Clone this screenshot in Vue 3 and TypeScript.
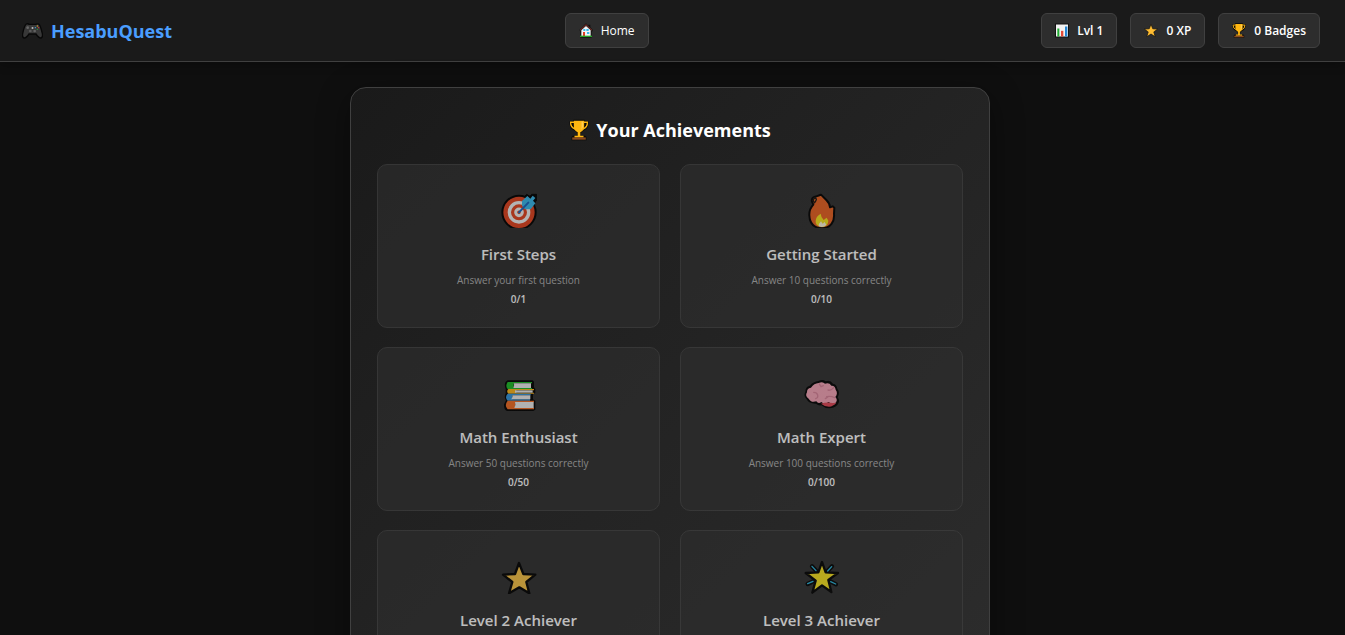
<script setup lang="ts">
interface Stat {
  icon: string
  label: string
}

interface Achievement {
  icon: string
  box: string
  title: string
  description: string
  progress: string
}

const stats: Stat[] = [
  { icon: 'chart', label: 'Lvl 1' },
  { icon: 'star', label: '0 XP' },
  { icon: 'trophy', label: '0 Badges' },
]

const achievements: Achievement[] = [
  { icon: 'target', box: '31 21 108 108', title: 'First Steps', description: 'Answer your first question', progress: '0/1' },
  { icon: 'flame', box: '40 21 108 108', title: 'Getting Started', description: 'Answer 10 questions correctly', progress: '0/10' },
  { icon: 'books', box: '31 15 108 108', title: 'Math Enthusiast', description: 'Answer 50 questions correctly', progress: '0/50' },
  { icon: 'brain', box: '40 15 108 108', title: 'Math Expert', description: 'Answer 100 questions correctly', progress: '0/100' },
  { icon: 'gold-star', box: '31 15 108 108', title: 'Level 2 Achiever', description: '', progress: '' },
  { icon: 'glow-star', box: '40 15 108 108', title: 'Level 3 Achiever', description: '', progress: '' },
]
</script>

<template>
  <div class="page">
    <svg class="sprite" aria-hidden="true">
      <symbol id="gamepad" viewBox="0 0 63 48">
        <path d="M13 3Q17 1 22 4H41Q47 1 51 4Q55 7 61 32Q63 43 57 45Q51 46 42 33H21Q12 46 6 45Q0 43 2 32Q7 7 13 3Z" fill="#383838" stroke="#080808" stroke-width="4" />
        <circle cx="17" cy="14" r="4" fill="#686868" />
        <circle cx="25" cy="24" r="4" fill="#5a5a5a" />
        <circle cx="38" cy="24" r="4" fill="#626262" />
        <path d="M29 13H34V17H29Z" fill="#eee" />
        <circle cx="40" cy="14" r="2" fill="#39a5dd" />
        <circle cx="46" cy="9" r="2" fill="#d9a72c" />
        <circle cx="50" cy="14" r="2" fill="#d73530" />
        <circle cx="46" cy="19" r="2" fill="#24a339" />
      </symbol>
      <symbol id="house" viewBox="0 0 42 45">
        <path d="M21 1L1 21L4 25H4V44H38V25H41V20L34 13V5H28V8Z" fill="#111" />
        <path d="M7 22L21 9L35 22V39H7Z" fill="#f4f4f4" />
        <path d="M3 22L21 5L39 22" fill="none" stroke="#8e332b" stroke-width="3" />
        <path d="M13 18H19V24H13ZM22 18H29V24H22ZM24 27H31V33H24Z" fill="#38b9ed" />
        <path d="M12 27H18V39H12Z" fill="#df3e28" />
        <path d="M3 38H39V42H3Z" fill="#26a326" />
      </symbol>
      <symbol id="chart" viewBox="0 0 42 42">
        <path d="M0 0H42V42H0Z" fill="#111" />
        <path d="M3 3H39V39H3Z" fill="#f2f2f2" />
        <path d="M7 15H13V39H7Z" fill="#20ae32" />
        <path d="M18 22H25V39H18Z" fill="#e44937" />
        <path d="M30 9H37V39H30Z" fill="#2384d3" />
      </symbol>
      <symbol id="star" viewBox="1 1 40 40">
        <path d="M21 3L26 16L40 17L29 25L33 39L21 31L9 39L13 25L2 17L16 16Z" fill="#ffbd32" stroke="#111" stroke-width="2" stroke-linejoin="round" />
      </symbol>
      <symbol id="trophy" viewBox="0 0 62 66">
        <path d="M14 1H48L49 5H59Q62 8 59 20Q56 33 43 35L36 43V51H50L54 55V65H8V55L12 51H26V43L19 35Q6 33 3 20Q0 8 3 5H13Z" fill="#090807" />
        <path d="M15 4H47V21Q47 34 35 40V51H45V56H17V51H27V40Q15 34 15 21Z" fill="#ffb711" />
        <path d="M17 9H5Q4 24 19 30M45 9H57Q58 24 43 30" fill="none" stroke="#ffb711" stroke-width="4" />
        <path d="M39 7H44V21Q43 28 37 33Q40 27 39 21Z" fill="#ffce57" />
        <path d="M10 56H52V63H10Z" fill="#8a4b20" />
      </symbol>
      <symbol id="target" viewBox="31 21 108 108">
        <path d="M91 46L108 28L118 34L123 28H138V45L132 54L125 72L91 59Z" fill="#000" stroke="#000" stroke-width="3" stroke-linejoin="round" />
        <circle cx="85" cy="82" r="50" fill="#e4421d" stroke="#000" stroke-width="6" />
        <circle cx="85" cy="82" r="29" fill="none" stroke="#f3f3f3" stroke-width="10" />
        <circle cx="85" cy="82" r="10" fill="#e4421d" stroke="#f3f3f3" stroke-width="9" />
        <path d="M94 62V48L110 33L119 41L126 32L134 39L127 47L134 55L120 73L103 73Z" fill="#36b9ed" />
        <path d="M85 82L113 53" fill="none" stroke="#1765c0" stroke-width="6" stroke-linecap="round" />
      </symbol>
      <symbol id="flame" viewBox="40 21 108 108">
        <path d="M91 29Q76 35 73 35Q61 39 64 50L68 59Q55 73 56 91C57 115 70 129 94 130C120 129 132 110 130 87L131 68L126 64L118 67Q118 56 107 45Q98 36 91 29Z" fill="#e9601e" stroke="#000" stroke-width="6" stroke-linejoin="round" />
        <path d="M75 38Q67 40 68 49L72 53Q76 48 77 43Z" fill="#ee681e" stroke="#17100c" stroke-width="4" />
        <path d="M90 86Q91 97 99 105L108 98L113 107Q113 124 94 126Q73 123 75 107Q76 94 90 86Z" fill="#f6e318" />
        <path d="M91 109L96 116L102 111L107 120Q96 130 84 123Q84 116 91 109Z" fill="#fff6dc" />
      </symbol>
      <symbol id="books" viewBox="31 15 108 108">
        <path d="M51 31H126L130 35V52L134 57V68L127 73V88L134 92V119L128 123H49Q39 120 40 103L46 91Q39 83 45 70V57Q40 44 45 35Z" fill="#000" />
        <path d="M51 36H124V40H69V54H124V57H51Q43 48 51 36Z" fill="#1bbb26" />
        <path d="M69 40H121V54H68Q73 46 69 40Z" fill="#eee" />
        <path d="M53 57H130V61H77V68H130V71H53Q46 64 53 57Z" fill="#ffb516" />
        <path d="M73 61H126V68H73Z" fill="#eee" />
        <path d="M51 71H120V76H65V88H118V92H51Q41 82 51 71Z" fill="#3095de" />
        <path d="M65 76H119V88H62Q67 82 65 76Z" fill="#eee" />
        <path d="M51 92H130V97H74V113H130V118H51Q40 106 51 92Z" fill="#f36b21" />
        <path d="M73 96H129V114H71Q76 105 73 96Z" fill="#eee" />
      </symbol>
      <symbol id="brain" viewBox="40 15 108 108">
        <path d="M83 33Q96 26 105 34Q119 29 127 41Q138 42 140 56Q149 67 141 82Q150 94 140 105Q130 115 116 115Q102 115 92 106Q83 108 76 101Q55 102 48 88Q37 78 44 65Q44 50 57 47Q68 35 83 33Z" fill="#000" />
        <path d="M84 39Q96 33 103 41Q116 37 122 47Q133 46 135 59Q143 69 134 81Q144 91 132 101Q121 102 113 96Q103 106 92 96Q83 103 77 94Q61 99 54 86Q42 78 49 67Q48 55 61 53Q70 40 84 39Z" fill="#f6a3b6" />
        <path d="M91 101Q108 95 126 99L137 98Q128 109 115 110Q102 110 91 101Z" fill="#df4353" />
        <path d="M69 67Q79 67 81 75Q83 84 75 86M86 42L91 50L98 47M112 60Q121 63 129 53M108 80Q120 77 132 83M104 86Q110 82 113 80" fill="none" stroke="#d98198" stroke-width="4" stroke-linecap="round" />
      </symbol>
      <symbol id="gold-star" viewBox="31 15 108 108">
        <path d="M85 30L98 63L134 65L107 87L116 121L86 103L55 121L65 87L37 65L73 63Z" fill="#f9c243" stroke="#000" stroke-width="7" stroke-linejoin="round" />
      </symbol>
      <symbol id="glow-star" viewBox="40 15 108 108">
        <g fill="none" stroke="#000" stroke-width="13" stroke-linecap="round">
          <path d="M64 40L77 54M110 55L124 40M51 93L67 85M119 85L136 94" />
        </g>
        <path d="M94 27L105 58L142 60L113 81L122 117L94 97L65 119L75 83L45 60L83 58Z" fill="#f7e11b" stroke="#000" stroke-width="7" stroke-linejoin="round" />
        <g fill="none" stroke="#28b4dc" stroke-width="4" stroke-linecap="round">
          <path d="M64 40L76 53M111 54L123 41M51 92L67 85M120 86L135 93" />
        </g>
      </symbol>
    </svg>

    <header class="topbar">
      <div class="brand">
        <svg class="brand-icon" aria-hidden="true"><use href="#gamepad" /></svg>
        <span>HesabuQuest</span>
      </div>
      <nav>
        <button class="pill home" type="button">
          <svg class="pill-icon" aria-hidden="true"><use href="#house" /></svg>
          <span>Home</span>
        </button>
      </nav>
      <div class="stats">
        <div v-for="stat in stats" :key="stat.label" class="pill">
          <svg class="pill-icon" aria-hidden="true"><use :href="'#' + stat.icon" /></svg>
          <span>{{ stat.label }}</span>
        </div>
      </div>
    </header>

    <div class="content">
      <main class="panel">
        <h1 class="heading">
          <svg class="heading-icon" aria-hidden="true"><use href="#trophy" /></svg>
          <span>Your Achievements</span>
        </h1>
        <div class="grid">
          <article v-for="item in achievements" :key="item.title" class="card">
            <svg class="card-icon" :viewBox="item.box" aria-hidden="true">
              <use :href="'#' + item.icon" :x="item.box.split(' ')[0]" :y="item.box.split(' ')[1]" width="108" height="108" />
            </svg>
            <h2>{{ item.title }}</h2>
            <p class="description">{{ item.description }}</p>
            <p class="progress">{{ item.progress }}</p>
          </article>
        </div>
      </main>
    </div>
  </div>
</template>

<style>
body {
  margin: 0;
  background: #0f0f0f;
}
</style>

<style scoped>
.page {
  box-sizing: border-box;
  height: 100vh;
  overflow: hidden;
  background: #0f0f0f;
  color: #fff;
  font-family: "Open Sans", "Noto Sans", sans-serif;
}

.sprite {
  position: absolute;
  width: 0;
  height: 0;
}

.topbar {
  display: flex;
  align-items: center;
  justify-content: space-between;
  padding: 13px 25px 13px 22px;
  border-bottom: 1px solid #404040;
  background: #1a1a1a;
  box-shadow: 0 2px 10px rgba(0, 0, 0, 0.3);
}

.brand {
  display: flex;
  align-items: center;
  gap: 8px;
  color: #4a9eff;
  font-size: 18px;
  font-weight: 700;
  line-height: 24px;
}

.brand-icon {
  width: 21px;
  height: 16px;
}

.stats {
  display: flex;
  gap: 13px;
}

.pill {
  display: flex;
  box-sizing: border-box;
  align-items: center;
  gap: 8px;
  height: 35px;
  padding: 0 13px;
  border: 1px solid #404040;
  border-radius: 6px;
  background: #2d2d2d;
  color: #fff;
  font-family: inherit;
  font-size: 12px;
  font-weight: 600;
  line-height: 18px;
  white-space: nowrap;
}

.home {
  font-weight: 500;
}

.pill-icon {
  width: 14px;
  height: 15px;
}

.content {
  padding: 25px 5px 0 0;
}

.panel {
  box-sizing: border-box;
  width: 100%;
  max-width: 640px;
  margin: 0 auto;
  padding: 26px;
  border: 1px solid #404040;
  border-radius: 16px;
  background: linear-gradient(135deg, #1a1a1a, #2d2d2d);
  box-shadow: 0 8px 32px rgba(0, 0, 0, 0.4);
}

.heading {
  display: flex;
  align-items: center;
  justify-content: center;
  gap: 7px;
  margin: 3px 0 21px;
  font-size: 18px;
  font-weight: 700;
  line-height: 26px;
}

.heading-icon {
  width: 20px;
  height: 22px;
}

.grid {
  display: grid;
  grid-template-columns: repeat(2, minmax(0, 1fr));
  gap: 19px 20px;
}

.card {
  display: flex;
  box-sizing: border-box;
  flex-direction: column;
  align-items: center;
  min-height: 164px;
  padding: 27px 20px 20px;
  border: 1px solid #404040;
  border-radius: 10px;
  background: #2d2d2d;
  opacity: 0.7;
  text-align: center;
}

.card-icon {
  width: 36px;
  height: 36px;
}

.card h2 {
  margin: 14px 0 6px;
  font-size: 15px;
  font-weight: 600;
  line-height: 24px;
}

.card p {
  margin: 0;
  font-size: 10px;
  line-height: 16px;
}

.card .description {
  margin-bottom: 3px;
  color: #b0b0b0;
}

.card .progress {
  font-weight: 600;
}
</style>
